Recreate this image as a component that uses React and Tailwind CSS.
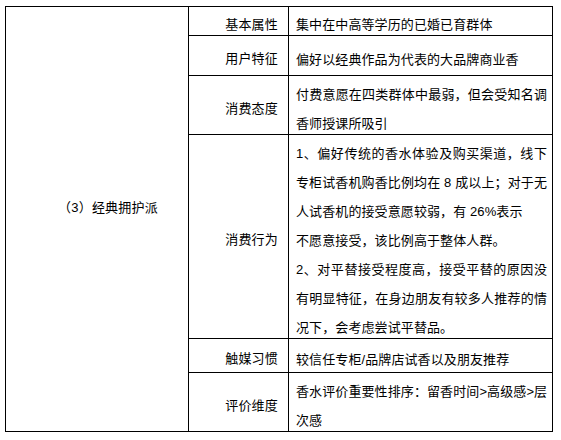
import React from "react";

const rows = [
  {
    label: "基本属性",
    lines: [["集中在中高等学历的已婚已育群体", false]],
  },
  {
    label: "用户特征",
    lines: [["偏好以经典作品为代表的大品牌商业香", false]],
  },
  {
    label: "消费态度",
    lines: [
      ["付费意愿在四类群体中最弱，但会受知名调", true],
      ["香师授课所吸引", false],
    ],
  },
  {
    label: "消费行为",
    lines: [
      ["1、偏好传统的香水体验及购买渠道，线下", true],
      ["专柜试香机购香比例均在 8 成以上；对于无", true],
      ["人试香机的接受意愿较弱，有 26%表示", false],
      ["不愿意接受，该比例高于整体人群。", false],
      ["2、对平替接受程度高，接受平替的原因没", true],
      ["有明显特征，在身边朋友有较多人推荐的情", true],
      ["况下，会考虑尝试平替品。", false],
    ],
  },
  {
    label: "触媒习惯",
    lines: [["较信任专柜/品牌店试香以及朋友推荐", false]],
  },
  {
    label: "评价维度",
    lines: [
      ["香水评价重要性排序：留香时间>高级感>层", true],
      ["次感", false],
    ],
  },
];

const App = () => {
  return (
    <div className="min-h-screen bg-white pt-[6px] pl-[5px] text-[13px] text-black [font-family:'Liberation_Sans','Noto_Sans_CJK_SC',sans-serif]">
      <div className="grid w-fit grid-cols-[183px_100px_264px] grid-rows-[29px_40px_59px_204px_34px_59px] border-l border-t border-black">
        <div className="row-span-6 flex items-center justify-center border-r border-b border-black pl-[22px] pb-[22px] tracking-[0.2px]">
          （3）经典拥护派
        </div>
        {rows.map((row, i) => (
          <React.Fragment key={i}>
            <div className="flex items-center justify-end border-r border-b border-black pr-[10px] pt-[7px] tracking-[0.2px]">
              {row.label}
            </div>
            <div className="flex min-w-0 flex-col justify-center border-r border-b border-black pl-[7px] pr-[5px] pt-[7px] leading-[29px] tracking-[0.1px]">
              {row.lines.map(([text, full], j) => (
                <div
                  key={j}
                  className={
                    full
                      ? "whitespace-nowrap text-justify [text-align-last:justify]"
                      : "whitespace-nowrap"
                  }
                >
                  {text}
                </div>
              ))}
            </div>
          </React.Fragment>
        ))}
      </div>
    </div>
  );
};

export default App;
